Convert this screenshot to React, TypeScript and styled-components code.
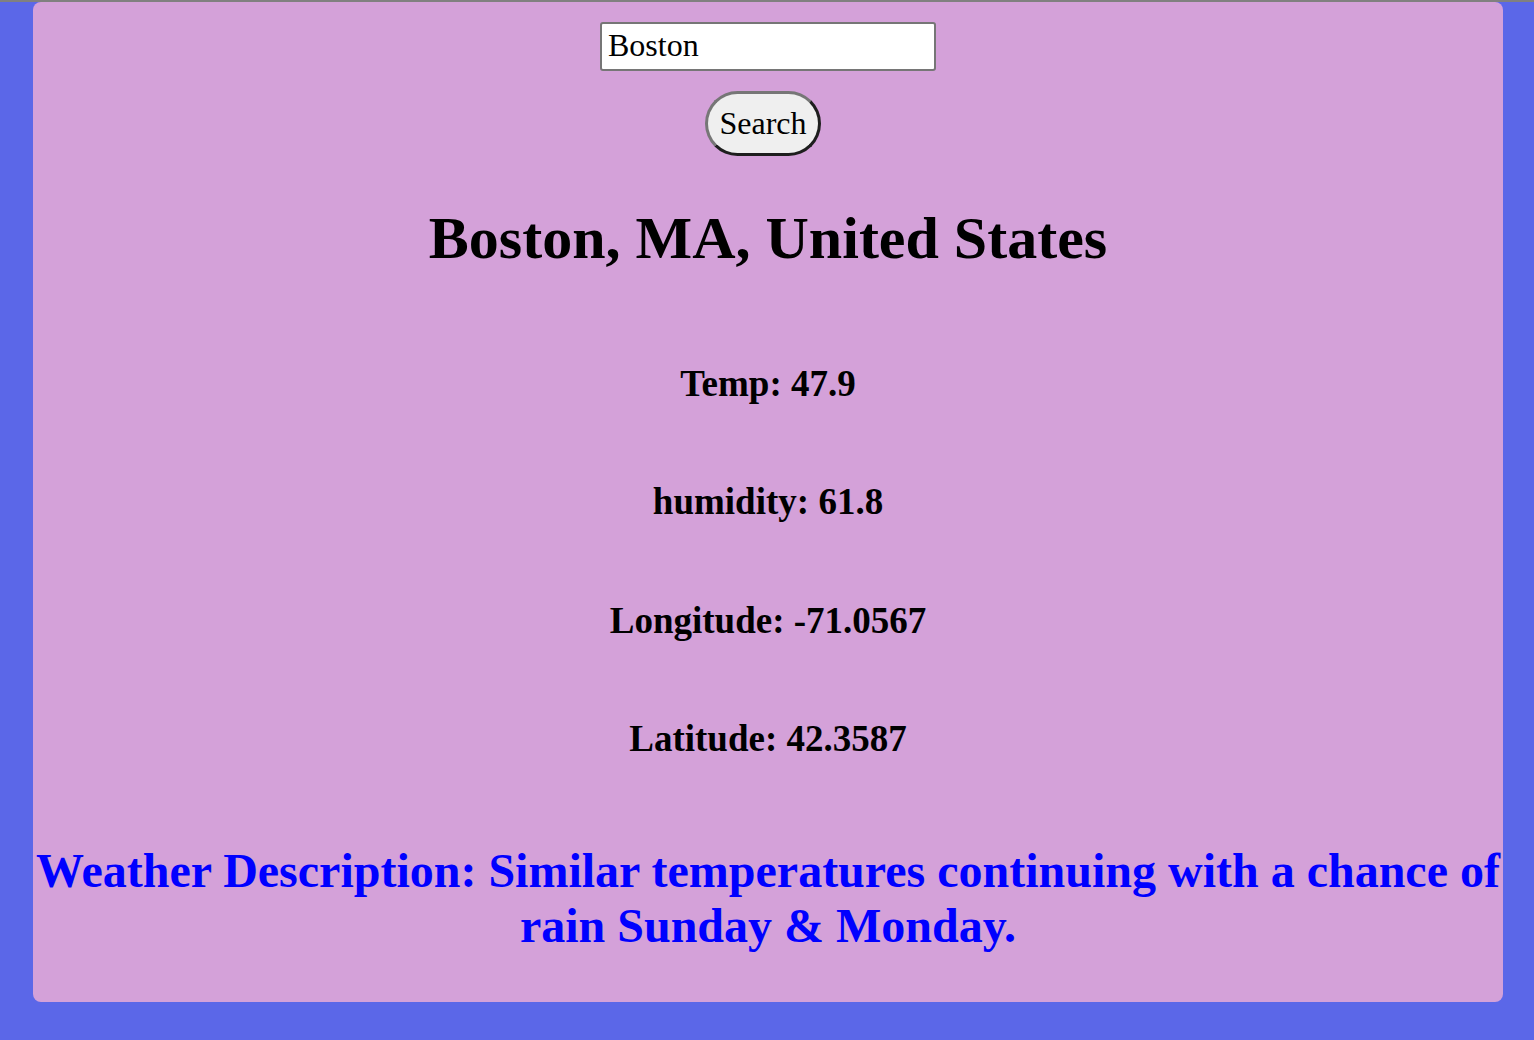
import React, { useState } from 'react';
import styled, { createGlobalStyle } from 'styled-components';

const GlobalStyle = createGlobalStyle`
  html, body {
    margin: 0;
    padding: 0;
  }
  body {
    background: #5b67e8;
    border-top: 2px solid #808080;
    min-height: 1038px;
    font-family: 'Liberation Serif', 'Times New Roman', serif;
  }
`;

const weather = {
  place: 'Boston, MA, United States',
  temp: 47.9,
  humidity: 61.8,
  longitude: -71.0567,
  latitude: 42.3587,
  description: 'Similar temperatures continuing with a chance of rain Sunday & Monday.',
};

const App = () => {
  const [query, setQuery] = useState('Boston');

  return (
    <>
      <GlobalStyle />
      <SCard>
        <SSearchForm onSubmit={(e) => e.preventDefault()}>
          <SInput value={query} onChange={(e) => setQuery(e.target.value)} />
          <SButton type='submit'>Search</SButton>
        </SSearchForm>
        <STitle>{weather.place}</STitle>
        <SStats>
          <SStat>Temp: {weather.temp}</SStat>
          <SStat>humidity: {weather.humidity}</SStat>
          <SStat>Longitude: {weather.longitude}</SStat>
          <SStat>Latitude: {weather.latitude}</SStat>
        </SStats>
        <SDescription>Weather Description: {weather.description}</SDescription>
      </SCard>
    </>
  );
};

export default App;

const SCard = styled.main`
  width: 1470px;
  margin-left: 33px;
  padding: 20px 0 49px;
  box-sizing: border-box;
  background: #d4a1d9;
  border-radius: 8px;
  display: flex;
  flex-direction: column;
  align-items: center;
  text-align: center;
  color: #000;
`;

const SSearchForm = styled.form`
  display: flex;
  flex-direction: column;
  align-items: center;
  gap: 20px;
`;

const SInput = styled.input`
  width: 336px;
  box-sizing: border-box;
  padding: 3px 6px 5px;
  border: 2px solid #767676;
  border-radius: 3px;
  background: #fff;
  font-family: 'Liberation Serif', 'Times New Roman', serif;
  font-size: 32px;
  color: #000;
  outline: none;
`;

const SButton = styled.button`
  margin-right: 10px;
  padding: 11px 11px;
  border: 3px solid;
  border-color: #767676 #1e1e1e #1e1e1e #767676;
  border-radius: 40px;
  background: #efefef;
  font-family: 'Liberation Serif', 'Times New Roman', serif;
  font-size: 32px;
  color: #000;
  cursor: pointer;
`;

const STitle = styled.h1`
  margin: 48px 0 0;
  font-size: 60px;
  font-weight: bold;
`;

const SStats = styled.section`
  display: flex;
  flex-direction: column;
  gap: 75.5px;
  margin-top: 88.5px;
`;

const SStat = styled.h3`
  margin: 0;
  font-size: 37px;
  font-weight: bold;
`;

const SDescription = styled.h2`
  margin: 83px 0 0;
  font-size: 48px;
  font-weight: bold;
  color: #0000ff;
`;
